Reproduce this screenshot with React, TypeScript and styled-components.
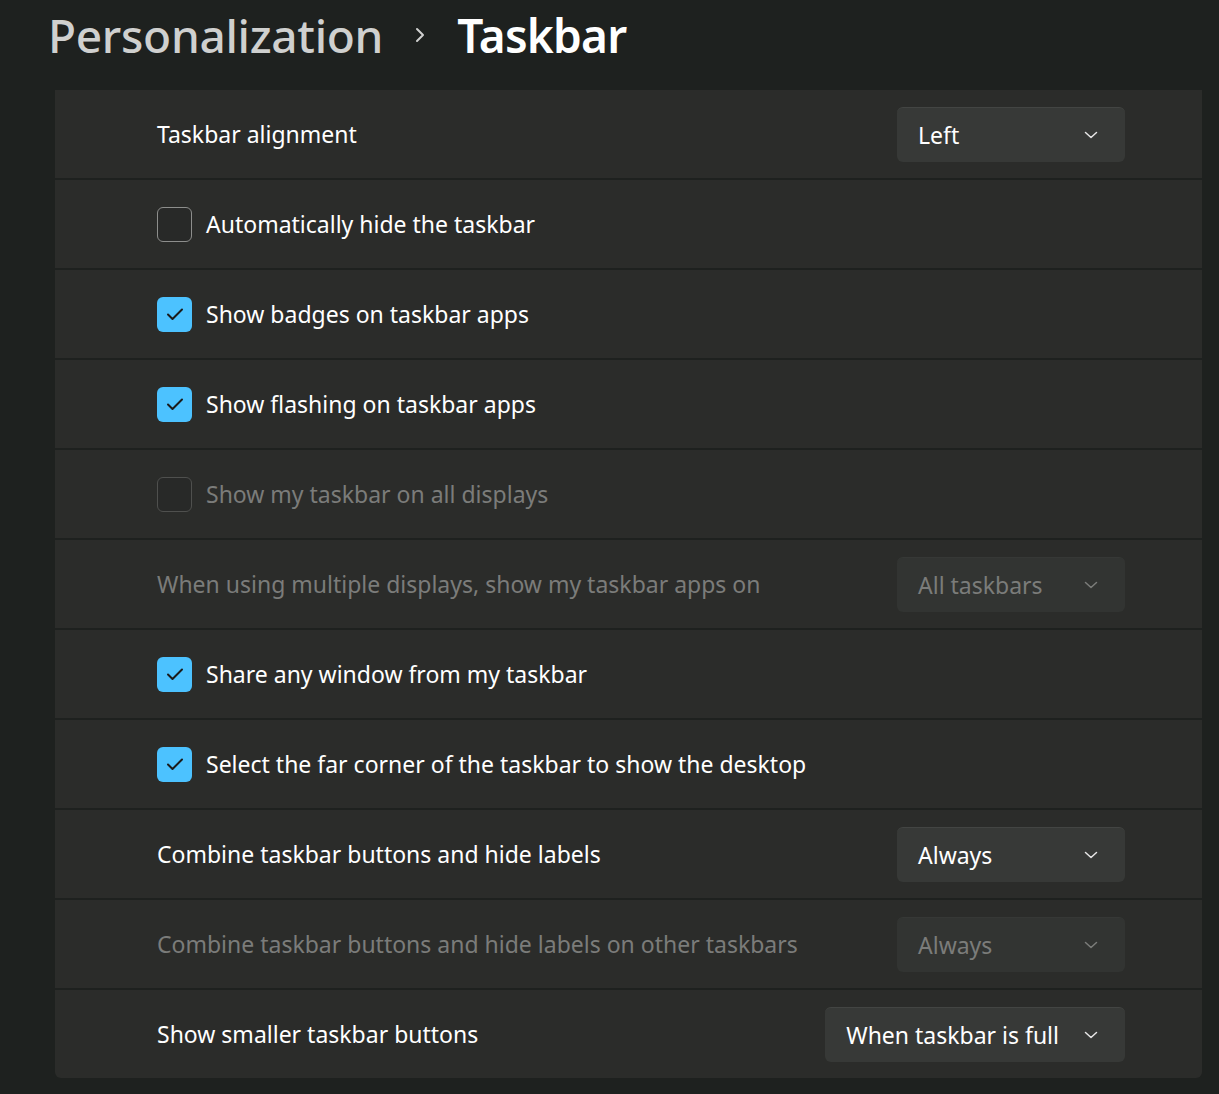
import React from 'react'
import styled, { createGlobalStyle } from 'styled-components'

const GlobalStyle = createGlobalStyle`
  html, body {
    margin: 0;
    padding: 0;
    background: #1e211f;
  }
  body {
    font-family: 'Noto Sans', 'Open Sans', sans-serif;
    color: #ffffff;
  }
`

const Page = styled.div`
  width: 1219px;
  height: 1094px;
  overflow: hidden;
  background: #1e211f;
`

const Breadcrumb = styled.div`
  display: flex;
  align-items: center;
  height: 70px;
  padding-left: 48px;
  padding-bottom: 20px;
  gap: 32px;
`

const Crumb = styled.h1<{ current?: boolean }>`
  margin: 0;
  font-size: 46px;
  line-height: 1;
  font-weight: ${props => (props.current ? 600 : 500)};
  color: ${props => (props.current ? '#ffffff' : '#cfd0cf')};
  letter-spacing: ${props => (props.current ? '-0.8px' : '-0.3px')};
`

const Panel = styled.div`
  margin-left: 55px;
  width: 1147px;
  display: flex;
  flex-direction: column;
  gap: 2px;
`

const Row = styled.div`
  height: 88px;
  display: flex;
  align-items: center;
  justify-content: space-between;
  padding: 0 77px 0 102px;
  background: #2b2c2a;
  &:last-child {
    border-radius: 0 0 6px 6px;
  }
`

const Label = styled.div<{ disabled?: boolean }>`
  display: flex;
  align-items: center;
  gap: 14px;
  font-size: 23px;
  color: ${props => (props.disabled ? '#7b7c7a' : '#ffffff')};
`

const Box = styled.div<{ checked?: boolean; disabled?: boolean }>`
  box-sizing: border-box;
  width: 35px;
  height: 35px;
  border-radius: 6px;
  display: flex;
  align-items: center;
  justify-content: center;
  background: ${props => (props.checked ? '#4cc2ff' : '#282928')};
  border: ${props =>
    props.checked
      ? 'none'
      : props.disabled
      ? '1.5px solid #4f504e'
      : '1.5px solid #8d8e8c'};
`

const Select = styled.div<{ disabled?: boolean }>`
  box-sizing: border-box;
  min-width: 228px;
  height: 55px;
  border-radius: 6px;
  display: flex;
  align-items: center;
  justify-content: space-between;
  padding: 0 26px 0 21px;
  gap: 24px;
  background: ${props => (props.disabled ? '#323432' : '#373937')};
  border-top: 1px solid ${props => (props.disabled ? '#363836' : '#434543')};
  font-size: 23px;
  color: ${props => (props.disabled ? '#7b7c7a' : '#ffffff')};
`

const Chevron = ({ disabled }: { disabled?: boolean }) => (
  <svg width="16" height="10" viewBox="0 0 16 10">
    <path
      d="M2.5 2.5 L8 7.5 L13.5 2.5"
      fill="none"
      stroke={disabled ? '#7b7c7a' : '#e6e6e6'}
      strokeWidth="1.5"
      strokeLinecap="round"
      strokeLinejoin="round"
    />
  </svg>
)

const Check = () => (
  <svg width="18" height="14" viewBox="0 0 18 14">
    <path
      d="M2 7.5 L6.5 12 L16 2.5"
      fill="none"
      stroke="#1b1b1b"
      strokeWidth="2"
      strokeLinecap="round"
      strokeLinejoin="round"
    />
  </svg>
)

type Setting =
  | { kind: 'select'; label: string; value: string; disabled?: boolean }
  | { kind: 'check'; label: string; checked: boolean; disabled?: boolean }

const settings: Setting[] = [
  { kind: 'select', label: 'Taskbar alignment', value: 'Left' },
  { kind: 'check', label: 'Automatically hide the taskbar', checked: false },
  { kind: 'check', label: 'Show badges on taskbar apps', checked: true },
  { kind: 'check', label: 'Show flashing on taskbar apps', checked: true },
  {
    kind: 'check',
    label: 'Show my taskbar on all displays',
    checked: false,
    disabled: true,
  },
  {
    kind: 'select',
    label: 'When using multiple displays, show my taskbar apps on',
    value: 'All taskbars',
    disabled: true,
  },
  { kind: 'check', label: 'Share any window from my taskbar', checked: true },
  {
    kind: 'check',
    label: 'Select the far corner of the taskbar to show the desktop',
    checked: true,
  },
  {
    kind: 'select',
    label: 'Combine taskbar buttons and hide labels',
    value: 'Always',
  },
  {
    kind: 'select',
    label: 'Combine taskbar buttons and hide labels on other taskbars',
    value: 'Always',
    disabled: true,
  },
  {
    kind: 'select',
    label: 'Show smaller taskbar buttons',
    value: 'When taskbar is full',
  },
]

const App = () => (
  <Page>
    <GlobalStyle />
    <Breadcrumb>
      <Crumb>Personalization</Crumb>
      <svg width="10" height="22" viewBox="0 0 10 22">
        <path
          d="M2 5 L8 11 L2 17"
          fill="none"
          stroke="#cfd0cf"
          strokeWidth="2"
          strokeLinecap="round"
          strokeLinejoin="round"
        />
      </svg>
      <Crumb current>Taskbar</Crumb>
    </Breadcrumb>
    <Panel>
      {settings.map(s => (
        <Row key={s.label}>
          {s.kind === 'check' ? (
            <Label disabled={s.disabled}>
              <Box checked={s.checked} disabled={s.disabled}>
                {s.checked ? <Check /> : null}
              </Box>
              {s.label}
            </Label>
          ) : (
            <>
              <Label disabled={s.disabled}>{s.label}</Label>
              <Select disabled={s.disabled}>
                {s.value}
                <Chevron disabled={s.disabled} />
              </Select>
            </>
          )}
        </Row>
      ))}
    </Panel>
  </Page>
)

export default App
